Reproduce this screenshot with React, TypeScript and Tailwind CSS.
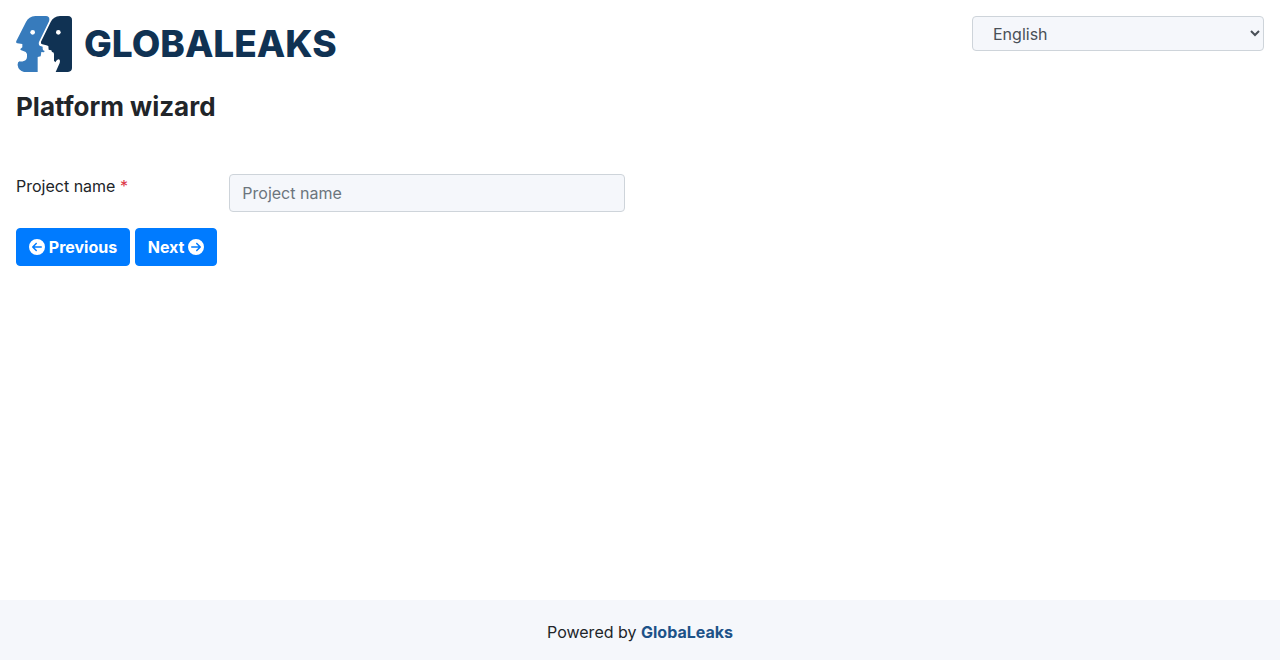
import { useState } from "react";
import { FaCircleArrowLeft, FaCircleArrowRight } from "react-icons/fa6";

function LogoMark() {
  return (
    <svg viewBox="0 0 168 168" className="size-14 shrink-0" aria-hidden="true">
      <path
        fill="#377bbc"
        d="M58 0H90Q101 1 100 11Q100 15 97 20L69 78Q67 86 71 89L80 92V99Q80 104 86 105L84 109L76 108L74 121L65 123V168H24Q7 164 5 148Q4 138 11 136Q17 138 23 135Q33 132 33 122V114Q31 106 22 105L14 102L13 99L19 94V84L4 82Q-1 81 1 75L30 18Q38 2 58 0Z"
      />
      <path
        fill="#103253"
        d="M132 0H156Q168 1 168 12V156Q168 167 156 168H119L131 141Q134 131 127 130Q122 131 118 139L114 134V114Q114 108 108 108L106 103L98 101L97 90L91 88L79 85Q73 83 75 77L104 18Q112 1 132 0Z"
      />
      <circle cx="50" cy="49" r="7" fill="white" />
      <circle cx="127" cy="49" r="7" fill="white" />
    </svg>
  );
}

export default function App() {
  const [projectName, setProjectName] = useState("");

  return (
    <div className="flex min-h-screen flex-col bg-white font-['Inter',sans-serif] text-base text-[#212529]">
      <header className="flex items-start justify-between pt-4">
        <a href="#" className="flex items-center gap-3 pl-4 text-[#103253]">
          <LogoMark />
          <span className="text-[37px] leading-14 font-extrabold">GLOBALEAKS</span>
        </a>
        <div className="w-1/4 pr-4 pl-3">
          <select
            aria-label="Language"
            defaultValue="en"
            className="block h-[35px] w-full rounded-sm border border-[#ced4da] bg-[#f5f7fb] pl-4 text-[#495057]"
          >
            <option value="en">English</option>
          </select>
        </div>
      </header>

      <main className="grow pt-4">
        <h1 className="px-4 text-[26px] leading-[38px] font-bold">Platform wizard</h1>
        <form className="pt-12" onSubmit={(event) => event.preventDefault()}>
          <div className="flex items-start">
            <label htmlFor="project-name" className="w-1/6 pl-4 leading-6">
              Project name <span className="text-[#dc3545]">*</span>
            </label>
            <div className="w-1/3 pr-[15px] pl-4">
              <input
                id="project-name"
                type="text"
                required
                placeholder="Project name"
                value={projectName}
                onChange={(event) => setProjectName(event.target.value)}
                className="block h-[38px] w-full rounded-sm border border-[#ced4da] bg-[#f5f7fb] px-3 text-[#495057] placeholder:text-[#6c757d]"
              />
            </div>
          </div>
          <div className="px-4 pt-4">
            <button
              type="button"
              className="h-[38px] rounded-sm border border-[#007bff] bg-[#007bff] px-3 font-bold text-white"
            >
              <FaCircleArrowLeft className="inline-block align-[-2px]" /> Previous
            </button>{" "}
            <button
              type="submit"
              className="h-[38px] rounded-sm border border-[#007bff] bg-[#007bff] px-3 font-bold text-white"
            >
              Next <FaCircleArrowRight className="inline-block align-[-2px]" />
            </button>
          </div>
        </form>
      </main>

      <footer className="bg-[#f5f7fb] pt-5 pb-4 text-center leading-6">
        Powered by{" "}
        <a href="#" className="font-bold text-[#1d5288]">
          GlobaLeaks
        </a>
      </footer>
    </div>
  );
}
